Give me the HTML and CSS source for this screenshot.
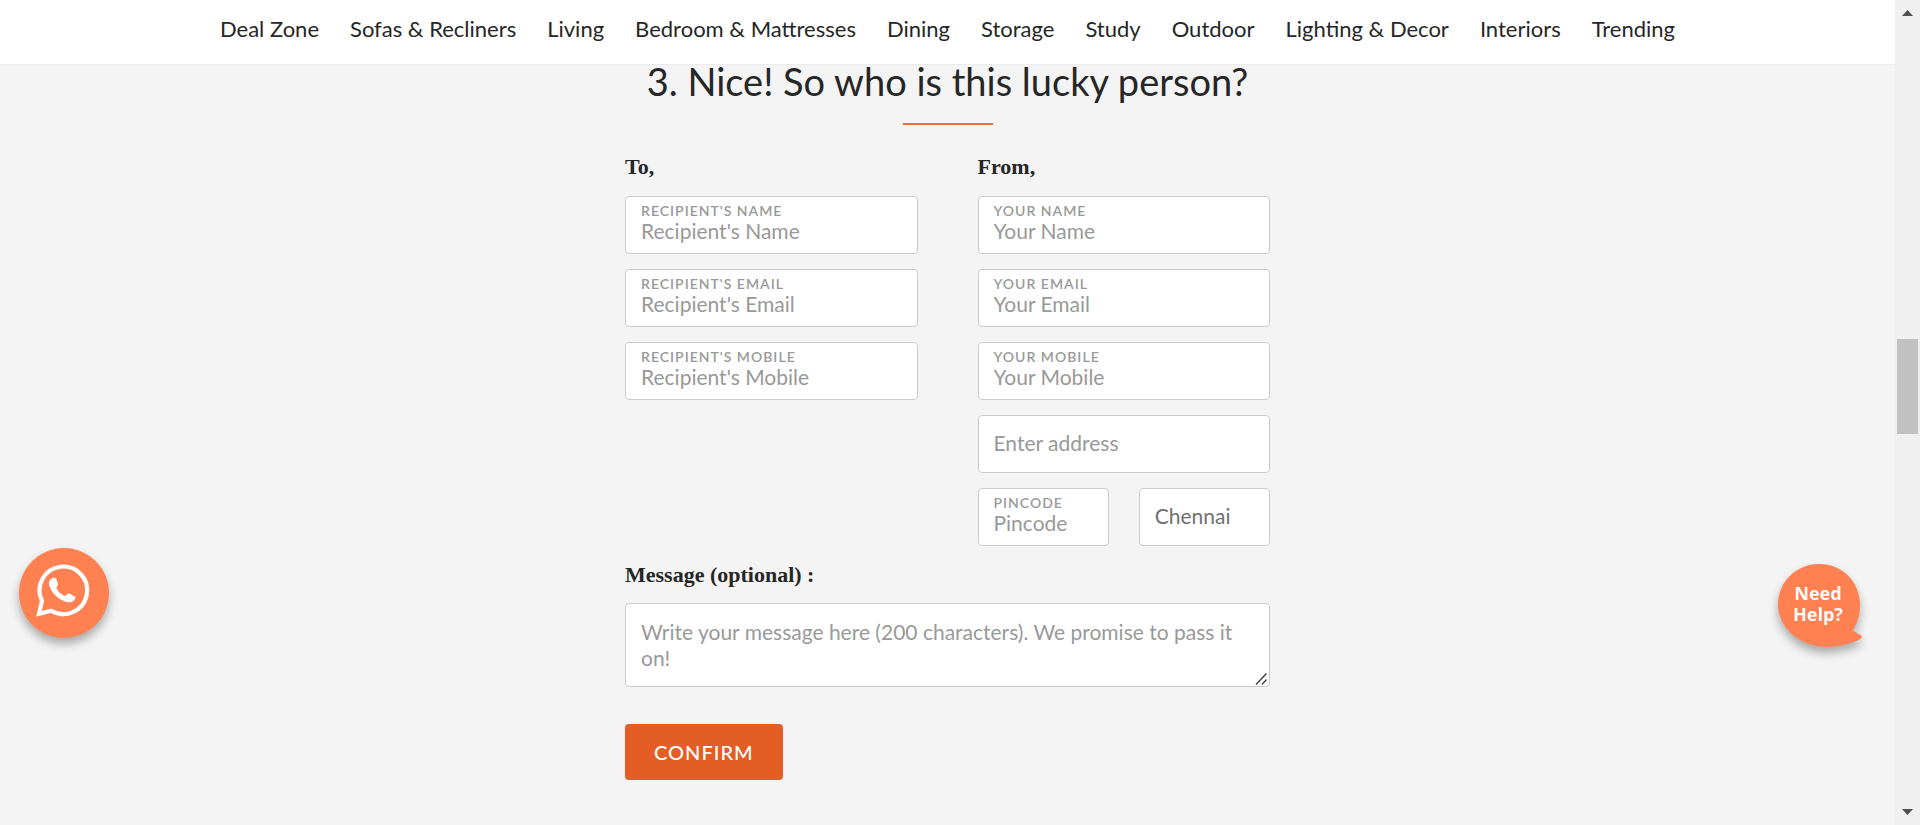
FILE: index.html
```html
<!DOCTYPE html>
<html lang="en">
<head>
<meta charset="utf-8">
<title>Gift Card</title>
<link rel="stylesheet" href="styles.css">
</head>
<body>
<div class="page">
  <header class="header">
    <nav class="nav">
      <a href="#">Deal Zone</a>
      <a href="#">Sofas &amp; Recliners</a>
      <a href="#">Living</a>
      <a href="#">Bedroom &amp; Mattresses</a>
      <a href="#">Dining</a>
      <a href="#">Storage</a>
      <a href="#">Study</a>
      <a href="#">Outdoor</a>
      <a href="#">Lighting &amp; Decor</a>
      <a href="#">Interiors</a>
      <a href="#">Trending</a>
    </nav>
  </header>
  <main class="main">
    <h1 class="title">3. Nice! So who is this lucky person?</h1>
    <form class="form">
      <div class="columns">
        <section class="column">
          <h2 class="subtitle">To,</h2>
          <div class="field"><label for="rname">Recipient's Name</label><input id="rname" type="text" placeholder="Recipient's Name"></div>
          <div class="field"><label for="remail">Recipient's Email</label><input id="remail" type="email" placeholder="Recipient's Email"></div>
          <div class="field"><label for="rmobile">Recipient's Mobile</label><input id="rmobile" type="tel" placeholder="Recipient's Mobile"></div>
        </section>
        <section class="column">
          <h2 class="subtitle">From,</h2>
          <div class="field"><label for="yname">Your Name</label><input id="yname" type="text" placeholder="Your Name"></div>
          <div class="field"><label for="yemail">Your Email</label><input id="yemail" type="email" placeholder="Your Email"></div>
          <div class="field"><label for="ymobile">Your Mobile</label><input id="ymobile" type="tel" placeholder="Your Mobile"></div>
          <div class="field"><input type="text" placeholder="Enter address" aria-label="Enter address"></div>
          <div class="pair">
            <div class="field"><label for="pin">Pincode</label><input id="pin" type="text" placeholder="Pincode"></div>
            <div class="field"><input class="city" type="text" value="Chennai" aria-label="City"></div>
          </div>
        </section>
      </div>
      <label class="subtitle" for="message">Message (optional) :</label>
      <div class="message-box">
        <textarea id="message" class="message" placeholder="Write your message here (200 characters). We promise to pass it on!"></textarea>
        <svg class="grip" viewBox="0 0 12 12" width="12" height="12" stroke="#444" stroke-width="1.500"><path d="M1 11.500 11.500 0.500M7 11.500 11.500 6.500"/></svg>
      </div>
      <button class="confirm" type="button">CONFIRM</button>
    </form>
  </main>
  <button class="bubble whatsapp" type="button" aria-label="WhatsApp">
    <svg viewBox="0 0 90 90" width="90" height="90" fill="none">
      <circle cx="45" cy="45" r="45" fill="#ff8050"/>
      <path d="M20 65.800 23 52.800A23.800 23.800 0 1 1 32.200 62.800Z" stroke="#fff" stroke-width="4.200"/>
      <path d="M34.500 29.800C30 31 29 35 30.800 39C34 46.500 40 52 47.500 54C52 55 56 53.500 56.500 49L50.500 45.500C48.500 45.200 47.500 47.500 46 48C42.500 47 38.500 43 37.500 39.500C38 38 39.500 37.500 39 35.500L37 30.500Q36 29.300 34.500 29.800Z" fill="#fff"/>
    </svg>
  </button>
  <button class="bubble help" type="button">
    <svg viewBox="0 0 84 83" width="84" height="83"><path d="M41 0C65 0 82 18 82 41C82 52 79 60 74.500 66.500L83 71.500Q85 73 83 74.500C76 79 60 83 48 83C22 83 0 63 0 41C0 18 18 0 41 0Z" fill="#ff8050"/></svg>
    <span>Need<br>Help?</span>
  </button>
</div>
<div class="scrollbar" aria-hidden="true">
  <svg class="arrow" viewBox="0 0 11 6" width="11" height="6"><path d="M0 6 5.500 0 11 6Z" fill="#505050"/></svg>
  <div class="track"><div class="thumb"></div></div>
  <svg class="arrow" viewBox="0 0 11 6" width="11" height="6"><path d="M0 0 5.500 6 11 0Z" fill="#505050"/></svg>
</div>
</body>
</html>
```
FILE: styles.css
```css
* { box-sizing: border-box; }
body {
  margin: 0;
  display: flex;
  min-height: 100vh;
  background: #f4f4f4;
  color: #262626;
  font-family: Lato, "Open Sans", sans-serif;
}
.page { flex: 1; min-width: 0; position: relative; }
.header {
  height: 65px;
  background: #fff;
  border-bottom: 1px solid #ececec;
}
.nav {
  display: flex;
  justify-content: center;
  gap: 31px;
  padding-top: 15px;
  font-size: 22px;
  line-height: 28px;
  white-space: nowrap;
}
.nav a { color: inherit; text-decoration: none; }
.title {
  margin: 0;
  font-size: 38px;
  line-height: 32px;
  font-weight: 400;
  text-align: center;
}
.title::after {
  content: "";
  display: block;
  width: 90px;
  height: 2px;
  margin: 26px auto 0;
  background: #e96f3d;
}
.form {
  max-width: 645px;
  margin: 28px auto 0;
}
.columns { display: grid; grid-template-columns: 1fr 1fr; gap: 60px; }
.column { display: flex; flex-direction: column; gap: 15px; }
.subtitle {
  display: block;
  margin: 0;
  font: bold 22px/28px "Liberation Serif", serif;
}
.field {
  display: flex;
  flex-direction: column;
  justify-content: center;
  height: 58px;
  padding: 0 15px 2px;
  background: #fff;
  border: 1px solid #ccc;
  border-radius: 4px;
}
.field label {
  color: #999;
  font-size: 14px;
  line-height: 14px;
  font-weight: 600;
  letter-spacing: 1px;
  text-transform: uppercase;
  white-space: nowrap;
}
.field input {
  width: 100%;
  padding: 0;
  border: 0;
  outline: 0;
  background: none;
  color: #999;
  font: 400 21px/26px Lato, sans-serif;
}
.field .city { color: #707070; }
::placeholder { color: #999; opacity: 1; }
.pair { display: grid; grid-template-columns: 1fr 1fr; gap: 30px; }
.form > .subtitle { margin: 15px 0 14px; }
.message-box { position: relative; }
.message {
  display: block;
  width: 100%;
  height: 84px;
  padding: 15px;
  border: 1px solid #ccc;
  border-radius: 4px;
  background: #fff;
  font: 400 21px/26px Lato, sans-serif;
  overflow: hidden;
  resize: none;
}
.grip { position: absolute; right: 3px; bottom: 2px; pointer-events: none; }
.confirm {
  height: 56px;
  margin-top: 37px;
  padding: 0 29px;
  border: 0;
  border-radius: 4px;
  background: #e45d25;
  color: #fff;
  font: 500 20px/28px Lato, sans-serif;
  letter-spacing: 1px;
}
.bubble {
  position: fixed;
  padding: 0;
  border: 0;
  background: none;
}
.bubble svg { display: block; overflow: visible; filter: drop-shadow(0 6px 5px rgba(0, 0, 0, 0.3)); }
.whatsapp { left: 19px; top: 548px; }
.help { right: 58px; top: 564px; color: #fff; font: 700 18px/21px "Open Sans", sans-serif; }
.help span { position: absolute; inset: 19px 4px auto 0; }
.scrollbar {
  display: flex;
  flex-direction: column;
  align-items: center;
  width: 25px;
  padding: 10px 2px;
  background: #f0f0f0;
}
.track { flex: 1; width: 100%; padding-top: 323px; }
.thumb { height: 95px; background: #c1c1c1; }
```
